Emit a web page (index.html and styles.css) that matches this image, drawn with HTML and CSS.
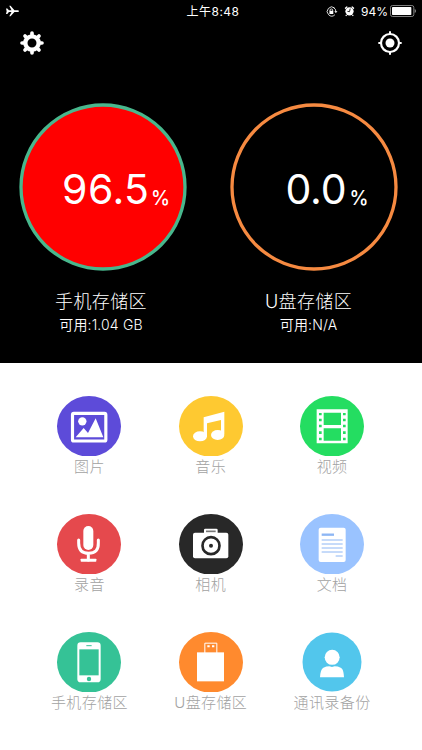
FILE: index.html
```html
<!DOCTYPE html>
<html lang="zh-CN">
<head>
<meta charset="utf-8">
<title>存储</title>
<link rel="stylesheet" href="styles.css">
</head>
<body>
<section class="top">
  <div class="status">
    <svg class="plane" viewBox="0 0 40 36"><path d="M0 10h4l5 6h8L10 2h4l12 14h10q4 0 4 2.500t-4 2.500H26L14 34h-4l7-13H9l-5 6H0l2-8.500z"/></svg>
    <span class="time">上午8:48</span>
    <div class="indicators">
      <svg class="lock" viewBox="0 0 36 34"><g fill="none" stroke="#fff" stroke-width="2.600"><path d="M26 6A14 14 0 1 0 27 27M22 4.500A14 14 0 0 1 30 18"/><path d="M12 16v-3a4 4 0 0 1 8 0v3"/></g><path d="M10 15h12v10H10zM25 16h10l-5 6z"/></svg>
      <svg class="alarm" viewBox="0 0 32 34"><circle cx="16" cy="18" r="12"/><path d="M2 8l6-5 3 2-7 7zM30 8l-6-5-3 2 7 7zM6 27l3 3-3 2-2-2zM26 27l-3 3 3 2 2-2z"/><path d="M18 10l-2 9-6-1" fill="none" stroke="#000" stroke-width="2.400"/></svg>
      <span class="percent">94%</span>
      <svg class="battery" viewBox="0 0 78 36"><rect x="1.500" y="1.500" width="70" height="33" rx="6" fill="none" stroke="#999" stroke-width="2.500"/><rect x="6" y="6" width="58" height="24" rx="2"/><path d="M74 12q4 1 4 6t-4 6z" fill="#888"/></svg>
    </div>
  </div>
  <nav class="tools">
    <svg class="tool" viewBox="-36 -36 72 72">
      <g stroke="#fff" stroke-width="11" stroke-linecap="round"><path d="M0-30V-24M0 30V24M-30 0H-24M30 0H24M-21-21l4 4M21 21l-4-4M21-21l-4 4M-21 21l4-4"/></g>
      <circle r="20" fill="none" stroke="#fff" stroke-width="13"/>
    </svg>
    <svg class="tool" viewBox="-36 -36 72 72">
      <circle r="27" fill="none" stroke="#fff" stroke-width="6.500"/><circle r="13.500"/>
      <path d="M0-35v10M0 35V25M-35 0h10M35 0H25" stroke="#fff" stroke-width="6"/>
    </svg>
  </nav>
  <div class="gauges">
    <div class="gauge phone">
      <svg class="dial" viewBox="0 0 168 168"><circle cx="84" cy="84" r="82" fill="#f00" stroke="#48b78d" stroke-width="3.300"/>
        <text class="value" x="43" y="101.300" textLength="87">96.5</text><text class="unit" x="132" y="101.500" textLength="19" lengthAdjust="spacingAndGlyphs">%</text></svg>
      <div class="name">手机存储区</div>
      <div class="free">可用:1.04 GB</div>
    </div>
    <div class="gauge usb">
      <svg class="dial" viewBox="0 0 168 168"><circle cx="84" cy="84" r="82" fill="none" stroke="#f68a41" stroke-width="3.300"/>
        <text class="value" x="55.500" y="101.300" textLength="61">0.0</text><text class="unit" x="119.500" y="101.500" textLength="19" lengthAdjust="spacingAndGlyphs">%</text></svg>
      <div class="name">U盘存储区</div>
      <div class="free">可用:N/A</div>
    </div>
  </div>
</section>
<main class="grid">
  <div class="item">
    <svg class="icon" viewBox="37 31 192 182"><ellipse cx="133" cy="122" rx="96" ry="91" fill="#5d4bd9"/><rect x="83.500" y="83" width="100" height="83" rx="4" fill="none" stroke="#fff" stroke-width="9.500"/><circle cx="113" cy="107" r="12.500"/><path d="M93 155l24-28 13 15 23-44 23 57z"/></svg>
    <span>图片</span>
  </div>
  <div class="item">
    <svg class="icon" viewBox="42 31 192 182"><ellipse cx="138" cy="122" rx="96" ry="91" fill="#fec931"/><path d="M116 95l62-17v68h-10v-43l-42 10v40h-10z"/><ellipse cx="105" cy="152" rx="21" ry="15"/><ellipse cx="158" cy="148" rx="20" ry="15"/></svg>
    <span>音乐</span>
  </div>
  <div class="item">
    <svg class="icon" viewBox="30 31 192 182"><ellipse cx="126" cy="122" rx="96" ry="91" fill="#24dd61"/><path d="M80 71h93v102H80z"/><g fill="#24dd61"><path d="M101 81h52v37h-52zM101 128h52v37h-52z"/><path d="M87 82h8v7h-8zM87 99h8v8h-8zM87 117h8v8h-8zM87 137h8v8h-8zM87 156h8v8h-8zM159 82h8v7h-8zM159 99h8v8h-8zM159 117h8v8h-8zM159 137h8v8h-8zM159 156h8v8h-8z"/></g></svg>
    <span>视频</span>
  </div>
  <div class="item">
    <svg class="icon" viewBox="37 25 192 182"><ellipse cx="133" cy="116" rx="96" ry="91" fill="#e5494d"/><rect x="116" y="61" width="30" height="72" rx="15"/><path d="M102 103v9q0 31 30 31t29-31v-9M131 143v20" fill="none" stroke="#fff" stroke-width="9" stroke-linecap="round"/><rect x="108" y="159" width="47" height="9" rx="2"/></svg>
    <span>录音</span>
  </div>
  <div class="item">
    <svg class="icon" viewBox="42 25 192 182"><ellipse cx="138" cy="116" rx="96" ry="91" fill="#282828"/><rect x="84" y="81" width="106" height="77" rx="6"/><path d="M117 83V73q0-4 4-4h33q4 0 4 4v10z"/><path d="M123 77h29" stroke="#777" stroke-width="5"/><circle cx="138" cy="120" r="25.500" fill="#fff" stroke="#282828" stroke-width="8"/><circle cx="138" cy="120" r="6" fill="#282828"/></svg>
    <span>相机</span>
  </div>
  <div class="item">
    <svg class="icon" viewBox="30 25 192 182"><ellipse cx="126" cy="116" rx="96" ry="91" fill="#9ac3ff"/><rect x="86" y="66" width="81" height="103" rx="6"/><g fill="none" stroke="#8db6f4"><path d="M95 87h37" stroke-width="7"/><path d="M95 103h63M95 115h63M95 127h63M95 139h63M137 151h21" stroke-width="3"/></g></svg>
    <span>文档</span>
  </div>
  <div class="item">
    <svg class="icon" viewBox="52 35 192 182"><ellipse cx="148" cy="126" rx="96" ry="91" fill="#35c296"/><rect x="113" y="66" width="70" height="120" rx="10"/><path d="M119 87h58v78h-58z" fill="#35c296"/><path d="M140 76h16" stroke="#35c296" stroke-width="3"/><circle cx="148" cy="176" r="6.500" fill="#35c296"/></svg>
    <span>手机存储区</span>
  </div>
  <div class="item">
    <svg class="icon" viewBox="417 35 192 182"><ellipse cx="513" cy="126" rx="96" ry="91" fill="#ff8a2e"/><path d="M471 96h81v87h-81z"/><path d="M494.500 98V68.500h36V98" fill="none" stroke="#fff" stroke-width="3"/><path d="M502 75h7v6h-7zM516 75h7v6h-7z"/></svg>
    <span>U盘存储区</span>
  </div>
  <div class="item">
    <svg class="icon" viewBox="61 35 192 182"><circle cx="157" cy="125" r="88.500" fill="#52c6ec"/><circle cx="157.500" cy="111" r="22.500"/><path d="M121 171c1-16 4-26 10-29q9-4 18-4l8 2 8-2q10 0 18 4c7 3 9 13 10 29z"/></svg>
    <span>通讯录备份</span>
  </div>
</main>
</body>
</html>
```
FILE: styles.css
```css
* { box-sizing: border-box; }
body {
  margin: 0;
  width: 422px;
  height: 750px;
  overflow: hidden;
  background: #fff;
  font-family: Inter, "Noto Sans CJK SC", sans-serif;
}
svg { display: block; fill: #fff; }
.top { height: 363px; background: #000; color: #fff; }
.status {
  display: grid;
  grid-template-columns: 1fr auto 1fr;
  align-items: center;
  height: 21px;
  padding: 0 6px;
}
.plane { width: 13px; height: 12px; }
.time { font-size: 12px; line-height: 21px; letter-spacing: .5px; font-weight: 400; padding: 1px 0 0 4px; }
.indicators { display: flex; align-items: center; justify-content: flex-end; }
.lock { width: 12px; height: 11px; margin-right: 6px; }
.alarm { width: 11px; height: 12px; margin-right: 6px; }
.percent { font-size: 12px; margin-right: 2px; padding-top: 1px; }
.battery { width: 26px; height: 12px; }
.tools { display: flex; justify-content: space-between; padding: 10px 20px 0; height: 82px; }
.tool { width: 24px; height: 24px; }
.gauges { display: flex; gap: 43px; padding-left: 19px; }
.gauge { width: 168px; text-align: center; white-space: nowrap; }
.dial { width: 168px; height: 168px; }
.value { font-size: 41px; font-weight: 400; }
.unit { font-size: 20px; font-weight: 500; }
.name { margin-top: 18px; font-size: 18px; line-height: 26px; letter-spacing: .4px; font-weight: 300; }
.free { font-size: 14px; line-height: 22px; letter-spacing: .15px; font-weight: 350; margin-top: -1px; }
.phone .name, .phone .free { padding-right: 4px; }
.usb .name, .usb .free { padding-right: 11px; }
.grid {
  display: grid;
  grid-template-columns: repeat(3, 121.300px);
  grid-auto-rows: 118px;
  padding: 32.500px 0 0 28.800px;
}
.item { display: flex; flex-direction: column; align-items: center; color: #a2a2a2; }
.item span { margin-top: 1px; font-size: 15px; line-height: 20px; font-weight: 300; letter-spacing: .4px; white-space: nowrap; }
.icon { width: 64px; height: 60.700px; }
```
